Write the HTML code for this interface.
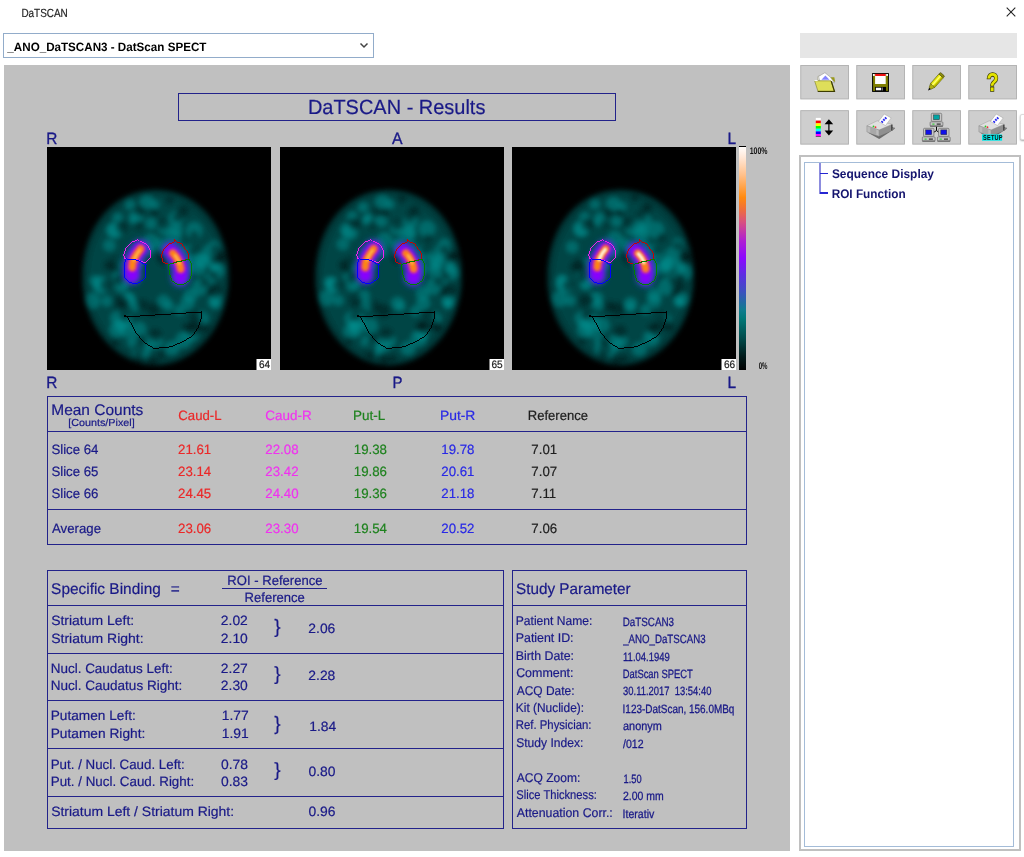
<!DOCTYPE html>
<html><head><meta charset="utf-8"><title>DaTSCAN</title>
<style>
html,body{margin:0;padding:0;background:#fff;}
body{width:1024px;height:857px;position:relative;overflow:hidden;font-family:"Liberation Sans",sans-serif;}
.abs,.t{position:absolute;white-space:nowrap;}
.t{color:#14147a;line-height:1;}
#panel{position:absolute;left:3.6px;top:64.85px;width:786.4px;height:785.8px;background:#c0c0c0;}
.brain{position:absolute;top:146.7px;}
.box{position:absolute;border:1px solid #22228a;box-sizing:border-box;}
.hl{position:absolute;height:1px;background:#22228a;}
.btn{position:absolute;width:48.7px;height:34.4px;background:#cdcdcd;box-sizing:border-box;border:1px solid #b4b4b4;border-bottom-color:#a8a8a8;border-right-color:#a8a8a8}
.f13{font-size:13.4px}
.sl{font-size:12.6px}.sv{font-size:11.4px}
.red{color:#e62828}.mag{color:#e83ce8}.grn{color:#1e7a1e}.blu{color:#2c2ce0}.blk{color:#1c1c1c}
</style></head><body>
<svg width="0" height="0" style="position:absolute"><defs>
<filter id="blur3" x="-20%" y="-20%" width="140%" height="140%"><feGaussianBlur stdDeviation="2.6"/></filter>
<filter id="blur5" x="-20%" y="-20%" width="140%" height="140%"><feGaussianBlur stdDeviation="5.5"/></filter>
<filter id="blur35" x="-60%" y="-60%" width="220%" height="220%"><feGaussianBlur stdDeviation="3.2"/></filter>
<filter id="blur2" x="-50%" y="-50%" width="200%" height="200%"><feGaussianBlur stdDeviation="2.6"/></filter>
<filter id="blur15" x="-50%" y="-50%" width="200%" height="200%"><feGaussianBlur stdDeviation="1.5"/></filter>
<filter id="blur1" x="-50%" y="-50%" width="200%" height="200%"><feGaussianBlur stdDeviation="1"/></filter>
</defs></svg>

<!-- title bar -->
<svg class="abs" style="left:1005px;top:6.3px" width="12" height="12" viewBox="0 0 12 12"><path d="M1.7 1.7 L10.3 10.3 M10.3 1.7 L1.7 10.3" stroke="#222" stroke-width="1.05" fill="none"/></svg>

<!-- combo -->
<div class="abs" style="left:3.3px;top:32.8px;width:370.6px;height:25px;box-sizing:border-box;border:1px solid #92acca;background:#fff"></div>
<svg class="abs" style="left:359px;top:42px" width="10" height="7" viewBox="0 0 10 7"><path d="M1.5 1.5 L5 5 L8.5 1.5" stroke="#444" stroke-width="1.5" fill="none"/></svg>

<div id="panel"></div>

<!-- results header -->
<div class="box" style="left:178px;top:93px;width:438px;height:27.5px"></div>

<!-- orientation labels -->

<svg class="brain" style="left:47px" width="224" height="223.4" viewBox="0 0 224 223.4">
<rect width="224" height="224" fill="#000"/>
<clipPath id="cp0"><path d="M34.599999999999994,130.0 C34.599999999999994,78.0 66.6,42 108.6,42 C150.6,42 182.6,78.0 182.6,130.0 C182.6,180.0 148.6,219 108.6,219 C68.6,219 34.599999999999994,180.0 34.599999999999994,130.0Z"/></clipPath>
<g filter="url(#blur3)"><g clip-path="url(#cp0)">
<path d="M34.599999999999994,130.0 C34.599999999999994,78.0 66.6,42 108.6,42 C150.6,42 182.6,78.0 182.6,130.0 C182.6,180.0 148.6,219 108.6,219 C68.6,219 34.599999999999994,180.0 34.599999999999994,130.0Z" fill="#003c3c"/>
<ellipse cx="108.6" cy="130.0" rx="67" ry="81" fill="#004545"/>
<circle cx="68.2" cy="83.7" r="7.7" fill="#009090" fill-opacity=".5"/>
<circle cx="162.7" cy="106.3" r="8.2" fill="#009090" fill-opacity=".5"/>
<circle cx="153.2" cy="140.1" r="8.3" fill="#009090" fill-opacity=".5"/>
<circle cx="70.7" cy="70.9" r="5.0" fill="#009090" fill-opacity=".5"/>
<circle cx="74.5" cy="139.3" r="6.7" fill="#009090" fill-opacity=".5"/>
<circle cx="87.5" cy="117.6" r="5.4" fill="#009090" fill-opacity=".5"/>
<circle cx="95.5" cy="204.1" r="7.6" fill="#009090" fill-opacity=".5"/>
<circle cx="140.6" cy="186.4" r="5.1" fill="#009090" fill-opacity=".5"/>
<circle cx="89.2" cy="108.8" r="4.5" fill="#009090" fill-opacity=".5"/>
<circle cx="132.3" cy="101.8" r="5.4" fill="#009090" fill-opacity=".5"/>
<circle cx="167.6" cy="120.1" r="5.7" fill="#009090" fill-opacity=".5"/>
<circle cx="155.6" cy="114.5" r="7.2" fill="#009090" fill-opacity=".5"/>
<circle cx="125.1" cy="201.0" r="7.3" fill="#009090" fill-opacity=".5"/>
<circle cx="166.9" cy="114.6" r="5.7" fill="#009090" fill-opacity=".5"/>
<circle cx="88.4" cy="159.6" r="5.1" fill="#009090" fill-opacity=".5"/>
<circle cx="143.5" cy="148.5" r="6.9" fill="#009090" fill-opacity=".5"/>
<circle cx="162.3" cy="132.0" r="5.9" fill="#009090" fill-opacity=".5"/>
<circle cx="86.8" cy="194.2" r="6.4" fill="#009090" fill-opacity=".5"/>
<circle cx="92.1" cy="182.0" r="7.3" fill="#009090" fill-opacity=".5"/>
<circle cx="170.2" cy="157.6" r="4.6" fill="#009090" fill-opacity=".5"/>
<circle cx="107.8" cy="57.8" r="4.6" fill="#009090" fill-opacity=".5"/>
<circle cx="117.4" cy="81.0" r="6.8" fill="#009090" fill-opacity=".5"/>
<circle cx="133.6" cy="131.2" r="5.2" fill="#009090" fill-opacity=".5"/>
<circle cx="141.4" cy="118.7" r="7.5" fill="#009090" fill-opacity=".5"/>
<circle cx="167.5" cy="99.3" r="5.9" fill="#009090" fill-opacity=".5"/>
<circle cx="77.4" cy="173.7" r="7.6" fill="#009090" fill-opacity=".5"/>
<circle cx="154.1" cy="172.0" r="7.7" fill="#009090" fill-opacity=".5"/>
<circle cx="125.4" cy="108.1" r="8.3" fill="#009090" fill-opacity=".5"/>
<circle cx="140.3" cy="156.2" r="6.9" fill="#009090" fill-opacity=".5"/>
<circle cx="144.3" cy="105.8" r="8.2" fill="#009090" fill-opacity=".5"/>
<circle cx="70.0" cy="116.5" r="5.8" fill="#009090" fill-opacity=".5"/>
<circle cx="121.9" cy="158.8" r="5.1" fill="#009090" fill-opacity=".5"/>
<circle cx="82.8" cy="57.3" r="5.1" fill="#009090" fill-opacity=".5"/>
<circle cx="168.7" cy="151.3" r="6.6" fill="#009090" fill-opacity=".5"/>
<circle cx="80.9" cy="151.8" r="6.9" fill="#009090" fill-opacity=".5"/>
<circle cx="129.5" cy="82.5" r="6.2" fill="#009090" fill-opacity=".5"/>
<circle cx="165.9" cy="156.3" r="4.6" fill="#009090" fill-opacity=".5"/>
<circle cx="47.6" cy="133.4" r="5.0" fill="#009090" fill-opacity=".5"/>
<circle cx="99.8" cy="54.7" r="7.0" fill="#009090" fill-opacity=".5"/>
<circle cx="114.0" cy="97.1" r="6.2" fill="#009090" fill-opacity=".5"/>
<circle cx="145.9" cy="188.6" r="5.7" fill="#009090" fill-opacity=".5"/>
<circle cx="45.5" cy="154.0" r="7.9" fill="#009090" fill-opacity=".5"/>
<circle cx="151.7" cy="121.6" r="6.5" fill="#009090" fill-opacity=".5"/>
<circle cx="104.1" cy="76.5" r="5.7" fill="#009090" fill-opacity=".5"/>
<circle cx="82.3" cy="152.2" r="6.0" fill="#009090" fill-opacity=".5"/>
<circle cx="171.1" cy="123.5" r="7.0" fill="#009090" fill-opacity=".5"/>
<circle cx="70.0" cy="129.5" r="4.9" fill="#009090" fill-opacity=".5"/>
<circle cx="99.7" cy="196.1" r="8.0" fill="#009090" fill-opacity=".5"/>
<circle cx="69.8" cy="182.9" r="7.6" fill="#009090" fill-opacity=".5"/>
<circle cx="89.4" cy="70.9" r="7.5" fill="#009090" fill-opacity=".5"/>
<circle cx="72.3" cy="179.1" r="5.6" fill="#009090" fill-opacity=".5"/>
<circle cx="53.5" cy="136.0" r="7.3" fill="#009090" fill-opacity=".5"/>
<circle cx="91.7" cy="203.9" r="7.1" fill="#009090" fill-opacity=".5"/>
<circle cx="88.4" cy="116.1" r="6.7" fill="#009090" fill-opacity=".5"/>
<circle cx="110.0" cy="194.9" r="6.4" fill="#009090" fill-opacity=".5"/>
<circle cx="129.0" cy="71.6" r="7.7" fill="#009090" fill-opacity=".5"/>
<circle cx="79.3" cy="182.7" r="7.5" fill="#009090" fill-opacity=".5"/>
<circle cx="126.4" cy="89.7" r="7.9" fill="#009090" fill-opacity=".5"/>
<circle cx="147.2" cy="83.5" r="8.4" fill="#009090" fill-opacity=".5"/>
<circle cx="154.0" cy="113.2" r="6.6" fill="#009090" fill-opacity=".5"/>
<circle cx="136.7" cy="193.1" r="8.2" fill="#009090" fill-opacity=".5"/>
<circle cx="53.9" cy="140.0" r="7.4" fill="#009090" fill-opacity=".5"/>
<circle cx="103.8" cy="94.3" r="7.6" fill="#009090" fill-opacity=".5"/>
<circle cx="62.4" cy="98.4" r="6.2" fill="#009090" fill-opacity=".5"/>
<circle cx="66.4" cy="83.1" r="7.0" fill="#009090" fill-opacity=".5"/>
<circle cx="102.7" cy="102.3" r="5.1" fill="#009090" fill-opacity=".5"/>
<circle cx="59.7" cy="154.1" r="5.4" fill="#009090" fill-opacity=".5"/>
<circle cx="88.7" cy="72.3" r="4.7" fill="#009090" fill-opacity=".5"/>
<circle cx="76.6" cy="136.0" r="4.7" fill="#009090" fill-opacity=".5"/>
<circle cx="132.5" cy="163.3" r="5.2" fill="#009090" fill-opacity=".5"/>
<circle cx="116.5" cy="154.2" r="6.4" fill="#009090" fill-opacity=".5"/>
<circle cx="69.9" cy="171.1" r="6.9" fill="#009090" fill-opacity=".5"/>
<circle cx="114.0" cy="207.7" r="4.0" fill="#001a1a" fill-opacity=".5"/>
<circle cx="77.3" cy="156.3" r="5.2" fill="#001a1a" fill-opacity=".5"/>
<circle cx="158.6" cy="181.1" r="5.1" fill="#001a1a" fill-opacity=".5"/>
<circle cx="163.0" cy="145.0" r="4.3" fill="#001a1a" fill-opacity=".5"/>
<circle cx="67.8" cy="114.5" r="5.7" fill="#001a1a" fill-opacity=".5"/>
<circle cx="168.1" cy="112.1" r="5.3" fill="#001a1a" fill-opacity=".5"/>
<circle cx="131.1" cy="70.0" r="5.1" fill="#001a1a" fill-opacity=".5"/>
<circle cx="140.7" cy="180.8" r="5.7" fill="#001a1a" fill-opacity=".5"/>
<circle cx="175.2" cy="109.1" r="5.8" fill="#001a1a" fill-opacity=".5"/>
<circle cx="68.4" cy="195.6" r="4.0" fill="#001a1a" fill-opacity=".5"/>
<circle cx="148.1" cy="169.6" r="5.8" fill="#001a1a" fill-opacity=".5"/>
<circle cx="144.9" cy="182.9" r="6.7" fill="#001a1a" fill-opacity=".5"/>
<circle cx="76.7" cy="169.4" r="4.7" fill="#001a1a" fill-opacity=".5"/>
<circle cx="91.9" cy="211.3" r="5.1" fill="#001a1a" fill-opacity=".5"/>
<circle cx="173.2" cy="111.4" r="5.8" fill="#001a1a" fill-opacity=".5"/>
<circle cx="105.9" cy="214.1" r="5.5" fill="#001a1a" fill-opacity=".5"/>
<circle cx="74.0" cy="155.1" r="7.0" fill="#001a1a" fill-opacity=".5"/>
<circle cx="72.5" cy="132.6" r="5.4" fill="#001a1a" fill-opacity=".5"/>
<circle cx="149.1" cy="175.2" r="5.3" fill="#001a1a" fill-opacity=".5"/>
<circle cx="92.3" cy="201.7" r="6.5" fill="#001a1a" fill-opacity=".5"/>
<circle cx="158.0" cy="135.6" r="4.8" fill="#001a1a" fill-opacity=".5"/>
<circle cx="167.7" cy="102.3" r="4.7" fill="#001a1a" fill-opacity=".5"/>
<circle cx="106.4" cy="162.2" r="7.0" fill="#001a1a" fill-opacity=".5"/>
<circle cx="94.8" cy="193.1" r="5.4" fill="#001a1a" fill-opacity=".5"/>
<circle cx="74.8" cy="80.1" r="6.2" fill="#001a1a" fill-opacity=".5"/>
<circle cx="152.1" cy="180.3" r="4.9" fill="#001a1a" fill-opacity=".5"/>
<circle cx="66.9" cy="120.3" r="4.9" fill="#001a1a" fill-opacity=".5"/>
<circle cx="61.5" cy="118.3" r="5.1" fill="#001a1a" fill-opacity=".5"/>
<circle cx="107.7" cy="65.8" r="4.1" fill="#001a1a" fill-opacity=".5"/>
<circle cx="108.3" cy="188.1" r="6.7" fill="#001a1a" fill-opacity=".5"/>
<circle cx="147.2" cy="88.1" r="4.0" fill="#001a1a" fill-opacity=".5"/>
<circle cx="116.0" cy="76.9" r="5.7" fill="#001a1a" fill-opacity=".5"/>
<circle cx="92.9" cy="64.5" r="5.4" fill="#001a1a" fill-opacity=".5"/>
<circle cx="147.3" cy="103.3" r="5.2" fill="#001a1a" fill-opacity=".5"/>
<circle cx="127.0" cy="101.9" r="4.9" fill="#001a1a" fill-opacity=".5"/>
<circle cx="116.6" cy="111.8" r="6.5" fill="#001a1a" fill-opacity=".5"/>
<circle cx="91.6" cy="78.0" r="4.9" fill="#001a1a" fill-opacity=".5"/>
<circle cx="122.7" cy="53.4" r="4.4" fill="#001a1a" fill-opacity=".5"/>
<circle cx="58.5" cy="137.9" r="5.5" fill="#001a1a" fill-opacity=".5"/>
<circle cx="95.6" cy="157.9" r="5.8" fill="#001a1a" fill-opacity=".5"/>
<circle cx="114.1" cy="109.7" r="4.7" fill="#001a1a" fill-opacity=".5"/>
<circle cx="136.4" cy="64.0" r="6.0" fill="#001a1a" fill-opacity=".5"/>
<circle cx="168.4" cy="143.2" r="6.9" fill="#001a1a" fill-opacity=".5"/>
<circle cx="166.6" cy="127.9" r="4.1" fill="#001a1a" fill-opacity=".5"/>
</g></g>
<path filter="url(#blur5)" fill="#000" fill-rule="evenodd" d="M-30,-30H254V254H-30Z M31.099999999999994,130.0 C31.099999999999994,78.0 66.6,38.5 108.6,38.5 C150.6,38.5 186.1,78.0 186.1,130.0 C186.1,180.0 148.6,222.5 108.6,222.5 C68.6,222.5 31.099999999999994,180.0 31.099999999999994,130.0Z"/>
<g fill="none" stroke-linecap="round">
<g filter="url(#blur35)" stroke="#2c50c4" stroke-width="19" stroke-opacity=".75"><path d="M93.8,101.5 Q88.5,107.0 85.5,116.0 Q84.0,123.0 85.0,128.5"/><path d="M123.5,103.5 Q130.0,109.0 133.0,119.0 Q134.5,125.0 133.3,130.5"/></g>
<g filter="url(#blur2)" stroke="#8800ff" stroke-width="14"><path d="M93.8,101.5 Q88.5,107.0 85.5,116.0 Q84.0,123.0 85.0,128.5"/><path d="M123.5,103.5 Q130.0,109.0 133.0,119.0 Q134.5,125.0 133.3,130.5"/></g>
<g filter="url(#blur15)" stroke="#e04088" stroke-width="8.5"><path d="M93.6,101.8 Q88.5,107.5 85.6,115.5 L85.2,120.5"/><path d="M125.8,106.2 Q130.5,110.5 133.0,118.5 L133.6,122.0"/></g>
<g filter="url(#blur15)" stroke="#ff8810" stroke-width="5.6"><path d="M93.6,101.8 Q88.5,107.5 85.6,115.5 L85.2,120.5"/><path d="M125.8,106.2 Q130.5,110.5 133.0,118.5 L133.6,122.0"/></g>
<g filter="url(#blur1)" stroke="#ffb050" stroke-width="2.6"><path d="M92.5,103.5 Q89.5,107.0 87.0,113.0"/><path d="M128.0,108.5 Q130.8,111.5 132.4,116.5"/></g>
</g>
<polygon points="90.2,91.8 92.7,94.3 96.1,95.2 100.7,98.5 103.7,104.0 103.7,110.3 97.8,115.8 92.3,113.7 89.8,112.4 83.9,112.4 78.0,111.8 76.6,107.6 79.3,100.6 84.3,95.2 89.8,93.5" fill="none" stroke="#f020f0" stroke-width="1" shape-rendering="crispEdges"/>
<polygon points="78.5,112.0 85.6,112.4 91.9,113.7 96.9,117.0 100.3,117.4 98.2,118.3 98.2,130.9 94.8,133.8 90.2,136.3 82.9,135.9 78.0,130.9 77.2,121.2" fill="none" stroke="#0000ff" stroke-width="1" shape-rendering="crispEdges"/>
<polygon points="127.6,92.4 129.7,95.2 134.3,96.4 137.7,101.5 141.7,106.5 141.9,111.8 136.4,113.7 129.1,114.9 121.7,117.4 115.8,114.9 114.4,108.6 116.7,102.3 121.7,97.3 127.2,95.2" fill="none" stroke="#c80000" stroke-width="1" shape-rendering="crispEdges"/>
<polygon points="121.7,117.4 129.1,115.3 136.4,113.7 142.3,112.0 144.4,117.0 144.6,126.5 142.7,133.0 138.1,137.0 130.1,137.2 124.9,133.8 122.8,127.5 121.7,121.2" fill="none" stroke="#008000" stroke-width="1" shape-rendering="crispEdges"/>
<polygon points="76.6,168.5 78.5,169.9 154.9,164.9 154.1,171.6 151.5,180.0 146.1,188.4 136.8,194.3 123.8,199.8 107.0,201.5 96.9,195.2 89.4,186.3 83.9,176.2 79.7,169.1" fill="none" stroke="#000" stroke-width="1" shape-rendering="crispEdges"/>
<rect x="209.5" y="212" width="14.5" height="12" fill="#fff"/>
</svg>
<svg class="brain" style="left:279.6px" width="224" height="223.4" viewBox="0 0 224 223.4">
<rect width="224" height="224" fill="#000"/>
<clipPath id="cp1"><path d="M34.599999999999994,130.0 C34.599999999999994,78.0 66.6,42 108.6,42 C150.6,42 182.6,78.0 182.6,130.0 C182.6,180.0 148.6,219 108.6,219 C68.6,219 34.599999999999994,180.0 34.599999999999994,130.0Z"/></clipPath>
<g filter="url(#blur3)"><g clip-path="url(#cp1)">
<path d="M34.599999999999994,130.0 C34.599999999999994,78.0 66.6,42 108.6,42 C150.6,42 182.6,78.0 182.6,130.0 C182.6,180.0 148.6,219 108.6,219 C68.6,219 34.599999999999994,180.0 34.599999999999994,130.0Z" fill="#003c3c"/>
<ellipse cx="108.6" cy="130.0" rx="67" ry="81" fill="#004545"/>
<circle cx="70.1" cy="85.2" r="7.7" fill="#009090" fill-opacity=".5"/>
<circle cx="162.6" cy="104.8" r="8.2" fill="#009090" fill-opacity=".5"/>
<circle cx="153.5" cy="139.5" r="8.3" fill="#009090" fill-opacity=".5"/>
<circle cx="72.1" cy="69.4" r="5.0" fill="#009090" fill-opacity=".5"/>
<circle cx="72.8" cy="137.9" r="6.7" fill="#009090" fill-opacity=".5"/>
<circle cx="88.0" cy="118.2" r="5.4" fill="#009090" fill-opacity=".5"/>
<circle cx="95.2" cy="201.2" r="7.6" fill="#009090" fill-opacity=".5"/>
<circle cx="140.7" cy="188.0" r="5.1" fill="#009090" fill-opacity=".5"/>
<circle cx="87.3" cy="107.8" r="4.5" fill="#009090" fill-opacity=".5"/>
<circle cx="131.1" cy="99.5" r="5.4" fill="#009090" fill-opacity=".5"/>
<circle cx="170.1" cy="122.4" r="5.7" fill="#009090" fill-opacity=".5"/>
<circle cx="156.2" cy="116.7" r="7.2" fill="#009090" fill-opacity=".5"/>
<circle cx="128.2" cy="201.5" r="7.3" fill="#009090" fill-opacity=".5"/>
<circle cx="169.8" cy="114.2" r="5.7" fill="#009090" fill-opacity=".5"/>
<circle cx="88.9" cy="158.9" r="5.1" fill="#009090" fill-opacity=".5"/>
<circle cx="142.7" cy="146.3" r="6.9" fill="#009090" fill-opacity=".5"/>
<circle cx="162.2" cy="132.2" r="5.9" fill="#009090" fill-opacity=".5"/>
<circle cx="87.3" cy="194.9" r="6.4" fill="#009090" fill-opacity=".5"/>
<circle cx="90.7" cy="178.8" r="7.3" fill="#009090" fill-opacity=".5"/>
<circle cx="167.5" cy="156.1" r="4.6" fill="#009090" fill-opacity=".5"/>
<circle cx="109.8" cy="57.6" r="4.6" fill="#009090" fill-opacity=".5"/>
<circle cx="116.7" cy="81.1" r="6.8" fill="#009090" fill-opacity=".5"/>
<circle cx="130.7" cy="130.7" r="5.2" fill="#009090" fill-opacity=".5"/>
<circle cx="140.3" cy="120.5" r="7.5" fill="#009090" fill-opacity=".5"/>
<circle cx="165.0" cy="97.3" r="5.9" fill="#009090" fill-opacity=".5"/>
<circle cx="78.5" cy="174.1" r="7.6" fill="#009090" fill-opacity=".5"/>
<circle cx="153.6" cy="172.3" r="7.7" fill="#009090" fill-opacity=".5"/>
<circle cx="122.5" cy="107.0" r="8.3" fill="#009090" fill-opacity=".5"/>
<circle cx="143.2" cy="156.5" r="6.9" fill="#009090" fill-opacity=".5"/>
<circle cx="144.5" cy="105.7" r="8.2" fill="#009090" fill-opacity=".5"/>
<circle cx="71.9" cy="118.9" r="5.8" fill="#009090" fill-opacity=".5"/>
<circle cx="120.4" cy="159.5" r="5.1" fill="#009090" fill-opacity=".5"/>
<circle cx="83.0" cy="60.2" r="5.1" fill="#009090" fill-opacity=".5"/>
<circle cx="168.5" cy="152.8" r="6.6" fill="#009090" fill-opacity=".5"/>
<circle cx="77.8" cy="154.3" r="6.9" fill="#009090" fill-opacity=".5"/>
<circle cx="130.0" cy="84.6" r="6.2" fill="#009090" fill-opacity=".5"/>
<circle cx="168.3" cy="157.2" r="4.6" fill="#009090" fill-opacity=".5"/>
<circle cx="49.2" cy="134.8" r="5.0" fill="#009090" fill-opacity=".5"/>
<circle cx="102.3" cy="54.4" r="7.0" fill="#009090" fill-opacity=".5"/>
<circle cx="117.1" cy="97.5" r="6.2" fill="#009090" fill-opacity=".5"/>
<circle cx="142.8" cy="185.7" r="5.7" fill="#009090" fill-opacity=".5"/>
<circle cx="46.2" cy="151.2" r="7.9" fill="#009090" fill-opacity=".5"/>
<circle cx="154.6" cy="123.8" r="6.5" fill="#009090" fill-opacity=".5"/>
<circle cx="101.6" cy="74.3" r="5.7" fill="#009090" fill-opacity=".5"/>
<circle cx="84.0" cy="148.9" r="6.0" fill="#009090" fill-opacity=".5"/>
<circle cx="172.4" cy="125.7" r="7.0" fill="#009090" fill-opacity=".5"/>
<circle cx="67.9" cy="129.9" r="4.9" fill="#009090" fill-opacity=".5"/>
<circle cx="102.2" cy="197.6" r="8.0" fill="#009090" fill-opacity=".5"/>
<circle cx="70.8" cy="184.1" r="7.6" fill="#009090" fill-opacity=".5"/>
<circle cx="91.7" cy="72.1" r="7.5" fill="#009090" fill-opacity=".5"/>
<circle cx="73.6" cy="178.9" r="5.6" fill="#009090" fill-opacity=".5"/>
<circle cx="52.5" cy="137.4" r="7.3" fill="#009090" fill-opacity=".5"/>
<circle cx="91.9" cy="201.4" r="7.1" fill="#009090" fill-opacity=".5"/>
<circle cx="88.8" cy="117.1" r="6.7" fill="#009090" fill-opacity=".5"/>
<circle cx="109.5" cy="193.9" r="6.4" fill="#009090" fill-opacity=".5"/>
<circle cx="130.2" cy="74.2" r="7.7" fill="#009090" fill-opacity=".5"/>
<circle cx="76.8" cy="181.5" r="7.5" fill="#009090" fill-opacity=".5"/>
<circle cx="126.9" cy="88.1" r="7.9" fill="#009090" fill-opacity=".5"/>
<circle cx="147.0" cy="82.0" r="8.4" fill="#009090" fill-opacity=".5"/>
<circle cx="156.1" cy="113.1" r="6.6" fill="#009090" fill-opacity=".5"/>
<circle cx="138.8" cy="191.4" r="8.2" fill="#009090" fill-opacity=".5"/>
<circle cx="53.8" cy="139.4" r="7.4" fill="#009090" fill-opacity=".5"/>
<circle cx="104.6" cy="92.8" r="7.6" fill="#009090" fill-opacity=".5"/>
<circle cx="62.9" cy="97.2" r="6.2" fill="#009090" fill-opacity=".5"/>
<circle cx="67.3" cy="83.3" r="7.0" fill="#009090" fill-opacity=".5"/>
<circle cx="103.0" cy="104.9" r="5.1" fill="#009090" fill-opacity=".5"/>
<circle cx="58.3" cy="153.4" r="5.4" fill="#009090" fill-opacity=".5"/>
<circle cx="86.9" cy="73.0" r="4.7" fill="#009090" fill-opacity=".5"/>
<circle cx="74.6" cy="135.6" r="4.7" fill="#009090" fill-opacity=".5"/>
<circle cx="135.2" cy="164.1" r="5.2" fill="#009090" fill-opacity=".5"/>
<circle cx="117.5" cy="156.1" r="6.4" fill="#009090" fill-opacity=".5"/>
<circle cx="71.4" cy="171.7" r="6.9" fill="#009090" fill-opacity=".5"/>
<circle cx="112.9" cy="210.8" r="4.0" fill="#001a1a" fill-opacity=".5"/>
<circle cx="76.2" cy="156.2" r="5.2" fill="#001a1a" fill-opacity=".5"/>
<circle cx="158.1" cy="180.4" r="5.1" fill="#001a1a" fill-opacity=".5"/>
<circle cx="163.4" cy="145.4" r="4.3" fill="#001a1a" fill-opacity=".5"/>
<circle cx="69.7" cy="115.5" r="5.7" fill="#001a1a" fill-opacity=".5"/>
<circle cx="169.3" cy="109.8" r="5.3" fill="#001a1a" fill-opacity=".5"/>
<circle cx="129.5" cy="70.0" r="5.1" fill="#001a1a" fill-opacity=".5"/>
<circle cx="142.0" cy="179.8" r="5.7" fill="#001a1a" fill-opacity=".5"/>
<circle cx="175.0" cy="109.4" r="5.8" fill="#001a1a" fill-opacity=".5"/>
<circle cx="69.1" cy="193.8" r="4.0" fill="#001a1a" fill-opacity=".5"/>
<circle cx="148.8" cy="168.6" r="5.8" fill="#001a1a" fill-opacity=".5"/>
<circle cx="142.3" cy="180.2" r="6.7" fill="#001a1a" fill-opacity=".5"/>
<circle cx="74.8" cy="170.0" r="4.7" fill="#001a1a" fill-opacity=".5"/>
<circle cx="90.7" cy="208.1" r="5.1" fill="#001a1a" fill-opacity=".5"/>
<circle cx="173.7" cy="109.2" r="5.8" fill="#001a1a" fill-opacity=".5"/>
<circle cx="104.6" cy="212.4" r="5.5" fill="#001a1a" fill-opacity=".5"/>
<circle cx="75.8" cy="153.0" r="7.0" fill="#001a1a" fill-opacity=".5"/>
<circle cx="72.4" cy="131.3" r="5.4" fill="#001a1a" fill-opacity=".5"/>
<circle cx="150.5" cy="176.2" r="5.3" fill="#001a1a" fill-opacity=".5"/>
<circle cx="90.1" cy="202.4" r="6.5" fill="#001a1a" fill-opacity=".5"/>
<circle cx="158.8" cy="134.5" r="4.8" fill="#001a1a" fill-opacity=".5"/>
<circle cx="164.3" cy="102.1" r="4.7" fill="#001a1a" fill-opacity=".5"/>
<circle cx="103.9" cy="163.6" r="7.0" fill="#001a1a" fill-opacity=".5"/>
<circle cx="93.5" cy="193.5" r="5.4" fill="#001a1a" fill-opacity=".5"/>
<circle cx="74.3" cy="77.0" r="6.2" fill="#001a1a" fill-opacity=".5"/>
<circle cx="155.4" cy="179.9" r="4.9" fill="#001a1a" fill-opacity=".5"/>
<circle cx="67.4" cy="121.8" r="4.9" fill="#001a1a" fill-opacity=".5"/>
<circle cx="63.2" cy="118.1" r="5.1" fill="#001a1a" fill-opacity=".5"/>
<circle cx="105.0" cy="66.2" r="4.1" fill="#001a1a" fill-opacity=".5"/>
<circle cx="106.4" cy="187.4" r="6.7" fill="#001a1a" fill-opacity=".5"/>
<circle cx="148.1" cy="90.9" r="4.0" fill="#001a1a" fill-opacity=".5"/>
<circle cx="117.0" cy="77.3" r="5.7" fill="#001a1a" fill-opacity=".5"/>
<circle cx="95.4" cy="66.2" r="5.4" fill="#001a1a" fill-opacity=".5"/>
<circle cx="146.1" cy="102.0" r="5.2" fill="#001a1a" fill-opacity=".5"/>
<circle cx="125.8" cy="98.7" r="4.9" fill="#001a1a" fill-opacity=".5"/>
<circle cx="118.7" cy="110.0" r="6.5" fill="#001a1a" fill-opacity=".5"/>
<circle cx="92.5" cy="77.6" r="4.9" fill="#001a1a" fill-opacity=".5"/>
<circle cx="122.0" cy="51.8" r="4.4" fill="#001a1a" fill-opacity=".5"/>
<circle cx="58.4" cy="138.1" r="5.5" fill="#001a1a" fill-opacity=".5"/>
<circle cx="94.7" cy="159.2" r="5.8" fill="#001a1a" fill-opacity=".5"/>
<circle cx="116.5" cy="111.5" r="4.7" fill="#001a1a" fill-opacity=".5"/>
<circle cx="134.3" cy="64.2" r="6.0" fill="#001a1a" fill-opacity=".5"/>
<circle cx="169.5" cy="143.3" r="6.9" fill="#001a1a" fill-opacity=".5"/>
<circle cx="166.0" cy="128.8" r="4.1" fill="#001a1a" fill-opacity=".5"/>
</g></g>
<path filter="url(#blur5)" fill="#000" fill-rule="evenodd" d="M-30,-30H254V254H-30Z M31.099999999999994,130.0 C31.099999999999994,78.0 66.6,38.5 108.6,38.5 C150.6,38.5 186.1,78.0 186.1,130.0 C186.1,180.0 148.6,222.5 108.6,222.5 C68.6,222.5 31.099999999999994,180.0 31.099999999999994,130.0Z"/>
<g fill="none" stroke-linecap="round">
<g filter="url(#blur35)" stroke="#2c50c4" stroke-width="19" stroke-opacity=".75"><path d="M93.8,101.5 Q88.5,107.0 85.5,116.0 Q84.0,123.0 85.0,128.5"/><path d="M123.5,103.5 Q130.0,109.0 133.0,119.0 Q134.5,125.0 133.3,130.5"/></g>
<g filter="url(#blur2)" stroke="#8800ff" stroke-width="14"><path d="M93.8,101.5 Q88.5,107.0 85.5,116.0 Q84.0,123.0 85.0,128.5"/><path d="M123.5,103.5 Q130.0,109.0 133.0,119.0 Q134.5,125.0 133.3,130.5"/></g>
<g filter="url(#blur15)" stroke="#e04088" stroke-width="8.5"><path d="M93.6,101.8 Q88.5,107.5 85.6,115.5 L85.2,120.5"/><path d="M125.8,106.2 Q130.5,110.5 133.0,118.5 L133.6,122.0"/></g>
<g filter="url(#blur15)" stroke="#ff8810" stroke-width="5.6"><path d="M93.6,101.8 Q88.5,107.5 85.6,115.5 L85.2,120.5"/><path d="M125.8,106.2 Q130.5,110.5 133.0,118.5 L133.6,122.0"/></g>
<g filter="url(#blur1)" stroke="#ffb050" stroke-width="2.6"><path d="M92.5,103.5 Q89.5,107.0 87.0,113.0"/><path d="M128.0,108.5 Q130.8,111.5 132.4,116.5"/></g>
</g>
<polygon points="90.2,91.8 92.7,94.3 96.1,95.2 100.7,98.5 103.7,104.0 103.7,110.3 97.8,115.8 92.3,113.7 89.8,112.4 83.9,112.4 78.0,111.8 76.6,107.6 79.3,100.6 84.3,95.2 89.8,93.5" fill="none" stroke="#f020f0" stroke-width="1" shape-rendering="crispEdges"/>
<polygon points="78.5,112.0 85.6,112.4 91.9,113.7 96.9,117.0 100.3,117.4 98.2,118.3 98.2,130.9 94.8,133.8 90.2,136.3 82.9,135.9 78.0,130.9 77.2,121.2" fill="none" stroke="#0000ff" stroke-width="1" shape-rendering="crispEdges"/>
<polygon points="127.6,92.4 129.7,95.2 134.3,96.4 137.7,101.5 141.7,106.5 141.9,111.8 136.4,113.7 129.1,114.9 121.7,117.4 115.8,114.9 114.4,108.6 116.7,102.3 121.7,97.3 127.2,95.2" fill="none" stroke="#c80000" stroke-width="1" shape-rendering="crispEdges"/>
<polygon points="121.7,117.4 129.1,115.3 136.4,113.7 142.3,112.0 144.4,117.0 144.6,126.5 142.7,133.0 138.1,137.0 130.1,137.2 124.9,133.8 122.8,127.5 121.7,121.2" fill="none" stroke="#008000" stroke-width="1" shape-rendering="crispEdges"/>
<polygon points="76.6,168.5 78.5,169.9 154.9,164.9 154.1,171.6 151.5,180.0 146.1,188.4 136.8,194.3 123.8,199.8 107.0,201.5 96.9,195.2 89.4,186.3 83.9,176.2 79.7,169.1" fill="none" stroke="#000" stroke-width="1" shape-rendering="crispEdges"/>
<rect x="209.5" y="212" width="14.5" height="12" fill="#fff"/>
</svg>
<svg class="brain" style="left:512.1px" width="224" height="223.4" viewBox="0 0 224 223.4">
<rect width="224" height="224" fill="#000"/>
<clipPath id="cp2"><path d="M34.599999999999994,130.0 C34.599999999999994,78.0 66.6,42 108.6,42 C150.6,42 182.6,78.0 182.6,130.0 C182.6,180.0 148.6,219 108.6,219 C68.6,219 34.599999999999994,180.0 34.599999999999994,130.0Z"/></clipPath>
<g filter="url(#blur3)"><g clip-path="url(#cp2)">
<path d="M34.599999999999994,130.0 C34.599999999999994,78.0 66.6,42 108.6,42 C150.6,42 182.6,78.0 182.6,130.0 C182.6,180.0 148.6,219 108.6,219 C68.6,219 34.599999999999994,180.0 34.599999999999994,130.0Z" fill="#003c3c"/>
<ellipse cx="108.6" cy="130.0" rx="67" ry="81" fill="#004545"/>
<circle cx="69.1" cy="81.8" r="7.7" fill="#009090" fill-opacity=".5"/>
<circle cx="161.5" cy="107.8" r="8.2" fill="#009090" fill-opacity=".5"/>
<circle cx="154.5" cy="139.8" r="8.3" fill="#009090" fill-opacity=".5"/>
<circle cx="72.5" cy="70.3" r="5.0" fill="#009090" fill-opacity=".5"/>
<circle cx="74.1" cy="136.5" r="6.7" fill="#009090" fill-opacity=".5"/>
<circle cx="89.9" cy="118.8" r="5.4" fill="#009090" fill-opacity=".5"/>
<circle cx="96.3" cy="202.3" r="7.6" fill="#009090" fill-opacity=".5"/>
<circle cx="140.8" cy="188.0" r="5.1" fill="#009090" fill-opacity=".5"/>
<circle cx="89.1" cy="108.8" r="4.5" fill="#009090" fill-opacity=".5"/>
<circle cx="133.0" cy="99.7" r="5.4" fill="#009090" fill-opacity=".5"/>
<circle cx="167.3" cy="121.2" r="5.7" fill="#009090" fill-opacity=".5"/>
<circle cx="155.0" cy="117.0" r="7.2" fill="#009090" fill-opacity=".5"/>
<circle cx="127.6" cy="202.3" r="7.3" fill="#009090" fill-opacity=".5"/>
<circle cx="169.3" cy="115.0" r="5.7" fill="#009090" fill-opacity=".5"/>
<circle cx="86.8" cy="158.4" r="5.1" fill="#009090" fill-opacity=".5"/>
<circle cx="142.2" cy="147.6" r="6.9" fill="#009090" fill-opacity=".5"/>
<circle cx="160.4" cy="132.0" r="5.9" fill="#009090" fill-opacity=".5"/>
<circle cx="88.6" cy="193.4" r="6.4" fill="#009090" fill-opacity=".5"/>
<circle cx="90.5" cy="178.1" r="7.3" fill="#009090" fill-opacity=".5"/>
<circle cx="168.2" cy="155.4" r="4.6" fill="#009090" fill-opacity=".5"/>
<circle cx="110.0" cy="59.8" r="4.6" fill="#009090" fill-opacity=".5"/>
<circle cx="119.8" cy="81.6" r="6.8" fill="#009090" fill-opacity=".5"/>
<circle cx="133.5" cy="132.4" r="5.2" fill="#009090" fill-opacity=".5"/>
<circle cx="140.0" cy="120.9" r="7.5" fill="#009090" fill-opacity=".5"/>
<circle cx="166.2" cy="97.0" r="5.9" fill="#009090" fill-opacity=".5"/>
<circle cx="80.3" cy="174.8" r="7.6" fill="#009090" fill-opacity=".5"/>
<circle cx="151.3" cy="172.6" r="7.7" fill="#009090" fill-opacity=".5"/>
<circle cx="121.7" cy="108.4" r="8.3" fill="#009090" fill-opacity=".5"/>
<circle cx="142.2" cy="153.6" r="6.9" fill="#009090" fill-opacity=".5"/>
<circle cx="143.8" cy="105.1" r="8.2" fill="#009090" fill-opacity=".5"/>
<circle cx="72.3" cy="116.6" r="5.8" fill="#009090" fill-opacity=".5"/>
<circle cx="118.2" cy="159.8" r="5.1" fill="#009090" fill-opacity=".5"/>
<circle cx="82.6" cy="56.9" r="5.1" fill="#009090" fill-opacity=".5"/>
<circle cx="170.3" cy="152.1" r="6.6" fill="#009090" fill-opacity=".5"/>
<circle cx="79.8" cy="153.0" r="6.9" fill="#009090" fill-opacity=".5"/>
<circle cx="129.6" cy="82.8" r="6.2" fill="#009090" fill-opacity=".5"/>
<circle cx="166.3" cy="154.2" r="4.6" fill="#009090" fill-opacity=".5"/>
<circle cx="49.8" cy="132.6" r="5.0" fill="#009090" fill-opacity=".5"/>
<circle cx="101.4" cy="56.7" r="7.0" fill="#009090" fill-opacity=".5"/>
<circle cx="113.2" cy="97.1" r="6.2" fill="#009090" fill-opacity=".5"/>
<circle cx="144.2" cy="185.6" r="5.7" fill="#009090" fill-opacity=".5"/>
<circle cx="47.3" cy="152.1" r="7.9" fill="#009090" fill-opacity=".5"/>
<circle cx="152.1" cy="120.8" r="6.5" fill="#009090" fill-opacity=".5"/>
<circle cx="104.6" cy="74.1" r="5.7" fill="#009090" fill-opacity=".5"/>
<circle cx="85.2" cy="151.1" r="6.0" fill="#009090" fill-opacity=".5"/>
<circle cx="173.8" cy="125.3" r="7.0" fill="#009090" fill-opacity=".5"/>
<circle cx="68.3" cy="130.4" r="4.9" fill="#009090" fill-opacity=".5"/>
<circle cx="102.2" cy="196.0" r="8.0" fill="#009090" fill-opacity=".5"/>
<circle cx="72.8" cy="183.2" r="7.6" fill="#009090" fill-opacity=".5"/>
<circle cx="89.2" cy="72.4" r="7.5" fill="#009090" fill-opacity=".5"/>
<circle cx="72.0" cy="177.3" r="5.6" fill="#009090" fill-opacity=".5"/>
<circle cx="50.8" cy="136.2" r="7.3" fill="#009090" fill-opacity=".5"/>
<circle cx="89.5" cy="202.8" r="7.1" fill="#009090" fill-opacity=".5"/>
<circle cx="89.4" cy="116.8" r="6.7" fill="#009090" fill-opacity=".5"/>
<circle cx="109.4" cy="194.1" r="6.4" fill="#009090" fill-opacity=".5"/>
<circle cx="131.9" cy="74.3" r="7.7" fill="#009090" fill-opacity=".5"/>
<circle cx="79.8" cy="182.7" r="7.5" fill="#009090" fill-opacity=".5"/>
<circle cx="129.0" cy="87.8" r="7.9" fill="#009090" fill-opacity=".5"/>
<circle cx="143.9" cy="82.8" r="8.4" fill="#009090" fill-opacity=".5"/>
<circle cx="154.8" cy="116.6" r="6.6" fill="#009090" fill-opacity=".5"/>
<circle cx="139.1" cy="191.5" r="8.2" fill="#009090" fill-opacity=".5"/>
<circle cx="53.2" cy="139.8" r="7.4" fill="#009090" fill-opacity=".5"/>
<circle cx="102.9" cy="91.6" r="7.6" fill="#009090" fill-opacity=".5"/>
<circle cx="60.2" cy="100.1" r="6.2" fill="#009090" fill-opacity=".5"/>
<circle cx="69.5" cy="82.6" r="7.0" fill="#009090" fill-opacity=".5"/>
<circle cx="102.7" cy="104.4" r="5.1" fill="#009090" fill-opacity=".5"/>
<circle cx="58.2" cy="153.5" r="5.4" fill="#009090" fill-opacity=".5"/>
<circle cx="89.0" cy="74.9" r="4.7" fill="#009090" fill-opacity=".5"/>
<circle cx="73.6" cy="136.2" r="4.7" fill="#009090" fill-opacity=".5"/>
<circle cx="133.7" cy="162.5" r="5.2" fill="#009090" fill-opacity=".5"/>
<circle cx="118.5" cy="156.5" r="6.4" fill="#009090" fill-opacity=".5"/>
<circle cx="69.6" cy="171.5" r="6.9" fill="#009090" fill-opacity=".5"/>
<circle cx="112.1" cy="211.1" r="4.0" fill="#001a1a" fill-opacity=".5"/>
<circle cx="77.3" cy="152.7" r="5.2" fill="#001a1a" fill-opacity=".5"/>
<circle cx="157.6" cy="179.8" r="5.1" fill="#001a1a" fill-opacity=".5"/>
<circle cx="162.9" cy="145.8" r="4.3" fill="#001a1a" fill-opacity=".5"/>
<circle cx="67.6" cy="116.5" r="5.7" fill="#001a1a" fill-opacity=".5"/>
<circle cx="171.8" cy="109.3" r="5.3" fill="#001a1a" fill-opacity=".5"/>
<circle cx="129.3" cy="68.9" r="5.1" fill="#001a1a" fill-opacity=".5"/>
<circle cx="140.9" cy="181.5" r="5.7" fill="#001a1a" fill-opacity=".5"/>
<circle cx="176.5" cy="109.9" r="5.8" fill="#001a1a" fill-opacity=".5"/>
<circle cx="70.5" cy="193.9" r="4.0" fill="#001a1a" fill-opacity=".5"/>
<circle cx="149.6" cy="169.6" r="5.8" fill="#001a1a" fill-opacity=".5"/>
<circle cx="144.5" cy="183.2" r="6.7" fill="#001a1a" fill-opacity=".5"/>
<circle cx="74.4" cy="168.6" r="4.7" fill="#001a1a" fill-opacity=".5"/>
<circle cx="90.5" cy="208.6" r="5.1" fill="#001a1a" fill-opacity=".5"/>
<circle cx="172.5" cy="111.8" r="5.8" fill="#001a1a" fill-opacity=".5"/>
<circle cx="104.6" cy="213.4" r="5.5" fill="#001a1a" fill-opacity=".5"/>
<circle cx="73.4" cy="153.8" r="7.0" fill="#001a1a" fill-opacity=".5"/>
<circle cx="69.7" cy="130.9" r="5.4" fill="#001a1a" fill-opacity=".5"/>
<circle cx="147.1" cy="176.3" r="5.3" fill="#001a1a" fill-opacity=".5"/>
<circle cx="93.4" cy="201.5" r="6.5" fill="#001a1a" fill-opacity=".5"/>
<circle cx="160.8" cy="133.4" r="4.8" fill="#001a1a" fill-opacity=".5"/>
<circle cx="165.8" cy="99.3" r="4.7" fill="#001a1a" fill-opacity=".5"/>
<circle cx="105.6" cy="161.7" r="7.0" fill="#001a1a" fill-opacity=".5"/>
<circle cx="92.9" cy="194.5" r="5.4" fill="#001a1a" fill-opacity=".5"/>
<circle cx="75.3" cy="77.7" r="6.2" fill="#001a1a" fill-opacity=".5"/>
<circle cx="153.7" cy="178.4" r="4.9" fill="#001a1a" fill-opacity=".5"/>
<circle cx="69.9" cy="119.5" r="4.9" fill="#001a1a" fill-opacity=".5"/>
<circle cx="62.9" cy="119.8" r="5.1" fill="#001a1a" fill-opacity=".5"/>
<circle cx="107.5" cy="66.2" r="4.1" fill="#001a1a" fill-opacity=".5"/>
<circle cx="108.2" cy="184.7" r="6.7" fill="#001a1a" fill-opacity=".5"/>
<circle cx="149.3" cy="90.5" r="4.0" fill="#001a1a" fill-opacity=".5"/>
<circle cx="115.7" cy="76.2" r="5.7" fill="#001a1a" fill-opacity=".5"/>
<circle cx="95.9" cy="66.4" r="5.4" fill="#001a1a" fill-opacity=".5"/>
<circle cx="145.9" cy="102.8" r="5.2" fill="#001a1a" fill-opacity=".5"/>
<circle cx="125.5" cy="100.3" r="4.9" fill="#001a1a" fill-opacity=".5"/>
<circle cx="117.0" cy="111.7" r="6.5" fill="#001a1a" fill-opacity=".5"/>
<circle cx="92.3" cy="76.9" r="4.9" fill="#001a1a" fill-opacity=".5"/>
<circle cx="122.9" cy="50.7" r="4.4" fill="#001a1a" fill-opacity=".5"/>
<circle cx="55.9" cy="138.1" r="5.5" fill="#001a1a" fill-opacity=".5"/>
<circle cx="97.0" cy="159.4" r="5.8" fill="#001a1a" fill-opacity=".5"/>
<circle cx="114.1" cy="108.1" r="4.7" fill="#001a1a" fill-opacity=".5"/>
<circle cx="135.1" cy="60.9" r="6.0" fill="#001a1a" fill-opacity=".5"/>
<circle cx="166.5" cy="139.8" r="6.9" fill="#001a1a" fill-opacity=".5"/>
<circle cx="168.9" cy="130.8" r="4.1" fill="#001a1a" fill-opacity=".5"/>
</g></g>
<path filter="url(#blur5)" fill="#000" fill-rule="evenodd" d="M-30,-30H254V254H-30Z M31.099999999999994,130.0 C31.099999999999994,78.0 66.6,38.5 108.6,38.5 C150.6,38.5 186.1,78.0 186.1,130.0 C186.1,180.0 148.6,222.5 108.6,222.5 C68.6,222.5 31.099999999999994,180.0 31.099999999999994,130.0Z"/>
<g fill="none" stroke-linecap="round">
<g filter="url(#blur35)" stroke="#2c50c4" stroke-width="19" stroke-opacity=".75"><path d="M93.8,101.5 Q88.5,107.0 85.5,116.0 Q84.0,123.0 85.0,128.5"/><path d="M123.5,103.5 Q130.0,109.0 133.0,119.0 Q134.5,125.0 133.3,130.5"/></g>
<g filter="url(#blur2)" stroke="#8800ff" stroke-width="14"><path d="M93.8,101.5 Q88.5,107.0 85.5,116.0 Q84.0,123.0 85.0,128.5"/><path d="M123.5,103.5 Q130.0,109.0 133.0,119.0 Q134.5,125.0 133.3,130.5"/></g>
<g filter="url(#blur15)" stroke="#e04088" stroke-width="8.5"><path d="M93.6,101.8 Q88.5,107.5 85.6,115.5 L85.2,120.5"/><path d="M125.8,106.2 Q130.5,110.5 133.0,118.5 L133.6,122.0"/></g>
<g filter="url(#blur15)" stroke="#ff8810" stroke-width="5.6"><path d="M93.6,101.8 Q88.5,107.5 85.6,115.5 L85.2,120.5"/><path d="M125.8,106.2 Q130.5,110.5 133.0,118.5 L133.6,122.0"/></g>
<g filter="url(#blur1)" stroke="#fff0dc" stroke-width="3.6"><path d="M93.2,102.5 Q89.5,106.5 87.3,112.5"/><path d="M126.5,107.0 Q130.0,110.0 131.8,115.5"/></g>
</g>
<polygon points="90.2,91.8 92.7,94.3 96.1,95.2 100.7,98.5 103.7,104.0 103.7,110.3 97.8,115.8 92.3,113.7 89.8,112.4 83.9,112.4 78.0,111.8 76.6,107.6 79.3,100.6 84.3,95.2 89.8,93.5" fill="none" stroke="#f020f0" stroke-width="1" shape-rendering="crispEdges"/>
<polygon points="78.5,112.0 85.6,112.4 91.9,113.7 96.9,117.0 100.3,117.4 98.2,118.3 98.2,130.9 94.8,133.8 90.2,136.3 82.9,135.9 78.0,130.9 77.2,121.2" fill="none" stroke="#0000ff" stroke-width="1" shape-rendering="crispEdges"/>
<polygon points="127.6,92.4 129.7,95.2 134.3,96.4 137.7,101.5 141.7,106.5 141.9,111.8 136.4,113.7 129.1,114.9 121.7,117.4 115.8,114.9 114.4,108.6 116.7,102.3 121.7,97.3 127.2,95.2" fill="none" stroke="#c80000" stroke-width="1" shape-rendering="crispEdges"/>
<polygon points="121.7,117.4 129.1,115.3 136.4,113.7 142.3,112.0 144.4,117.0 144.6,126.5 142.7,133.0 138.1,137.0 130.1,137.2 124.9,133.8 122.8,127.5 121.7,121.2" fill="none" stroke="#008000" stroke-width="1" shape-rendering="crispEdges"/>
<polygon points="76.6,168.5 78.5,169.9 154.9,164.9 154.1,171.6 151.5,180.0 146.1,188.4 136.8,194.3 123.8,199.8 107.0,201.5 96.9,195.2 89.4,186.3 83.9,176.2 79.7,169.1" fill="none" stroke="#000" stroke-width="1" shape-rendering="crispEdges"/>
<rect x="209.5" y="212" width="14.5" height="12" fill="#fff"/>
</svg>

<!-- colour bar -->
<div class="abs" style="left:739px;top:146px;width:7px;height:224px;background:linear-gradient(to bottom,#fff 0%,#ffe8d8 5%,#ffc08a 13%,#ff8a10 23%,#f07038 28%,#d85080 34%,#b020d0 42%,#8c08ff 50%,#5a30e0 58%,#3c50c0 65%,#107c90 73%,#007878 77%,#004a4a 86%,#001a1a 94%,#000 100%)"></div>
<div class="abs" style="left:739px;top:145.5px;width:7px;height:1px;background:#000"></div>

<!-- mean counts table -->
<div class="box" style="left:47px;top:396px;width:700px;height:148.5px"></div>
<div class="hl" style="left:47px;top:431px;width:700px"></div>
<div class="hl" style="left:47px;top:509px;width:700px"></div>





<!-- specific binding -->
<div class="box" style="left:47px;top:570px;width:457px;height:259px"></div>
<div class="hl" style="left:47px;top:605px;width:457px"></div>
<div class="hl" style="left:47px;top:653px;width:457px"></div>
<div class="hl" style="left:47px;top:700px;width:457px"></div>
<div class="hl" style="left:47px;top:748px;width:457px"></div>
<div class="hl" style="left:47px;top:796px;width:457px"></div>
<div class="hl" style="left:222px;top:588px;width:105px"></div>

<!-- study parameter -->
<div class="box" style="left:512px;top:570px;width:235px;height:259px"></div>
<div class="hl" style="left:512px;top:605px;width:235px"></div>

<!-- right side -->
<div class="abs" style="left:800px;top:33px;width:217px;height:24.5px;background:#e6e6e6"></div>
<div class="abs" style="left:1020.3px;top:114px;width:12px;height:25.5px;box-sizing:border-box;background:#fff;border:1px solid #dcdcdc;border-radius:2px;box-shadow:0 1px 2px rgba(0,0,0,.35)"></div>
<!-- tree panel -->
<div class="abs" style="left:799.3px;top:154.8px;width:221.7px;height:696px;box-sizing:border-box;background:#fff;border:2.7px solid #c0c0c0"></div>
<div class="abs" style="left:803.8px;top:162.1px;width:210.2px;height:685.4px;box-sizing:border-box;border:1.3px solid #a4bcd8;background:#fff"></div>
<div class="abs" style="left:819.4px;top:163.4px;width:1.3px;height:30.2px;background:#8c8cde"></div>
<div class="abs" style="left:820px;top:172.8px;width:8.2px;height:1.3px;background:#2626d2"></div>
<div class="abs" style="left:820px;top:192.4px;width:8.2px;height:1.3px;background:#2626d2"></div>

<svg class="abs" style="left:0;top:0;pointer-events:none;will-change:transform;opacity:.999" width="1024" height="857" viewBox="0 0 1024 857">
<rect x="800.75" y="65.45" width="47.80" height="33.50" fill="#cecece" stroke="#b0b0b0" stroke-width=".9"/>
<rect x="856.75" y="65.45" width="47.80" height="33.50" fill="#cecece" stroke="#b0b0b0" stroke-width=".9"/>
<rect x="912.75" y="65.45" width="47.80" height="33.50" fill="#cecece" stroke="#b0b0b0" stroke-width=".9"/>
<rect x="968.75" y="65.45" width="47.80" height="33.50" fill="#cecece" stroke="#b0b0b0" stroke-width=".9"/>
<rect x="800.75" y="110.65" width="47.80" height="33.50" fill="#cecece" stroke="#b0b0b0" stroke-width=".9"/>
<rect x="856.75" y="110.65" width="47.80" height="33.50" fill="#cecece" stroke="#b0b0b0" stroke-width=".9"/>
<rect x="912.75" y="110.65" width="47.80" height="33.50" fill="#cecece" stroke="#b0b0b0" stroke-width=".9"/>
<rect x="968.75" y="110.65" width="47.80" height="33.50" fill="#cecece" stroke="#b0b0b0" stroke-width=".9"/>
<polygon points="817.9,76.4 820.5,75.6 821.4,79.5 817.7,80.4" fill="#f4f4e8" stroke="#8c8c6c" stroke-width=".5"/>
<polygon points="830.6,77.3 834.3,77.3 835.2,81.7 830.8,81.7" fill="#9a9a1c"/>
<polygon points="818.6,76.4 824.9,72.7 829.9,76.7 834.8,83.0 830.8,81.3 819.7,81.0" fill="#fff" stroke="#9a9a9a" stroke-width=".6"/>
<polygon points="821.4,79.7 825.4,75.6 829.5,79.7" fill="#8484ff"/>
<polygon points="814.6,80.8 831.0,80.8 834.3,91.1 817.9,91.1" fill="#dede5a" stroke="#6a6a10" stroke-width=".5"/>
<polyline points="817.7,91.5 834.5,91.5 831.3,81.3" fill="none" stroke="#3c3c00" stroke-width="1.2"/>
<polyline points="814.4,80.6 817.7,80.6" fill="none" stroke="#fff" stroke-width="1"/>
<rect x="872.6" y="73.6" width="15.8" height="17.8" fill="#808000" stroke="#000" stroke-width="1"/>
<rect x="875.1" y="74" width="10.6" height="10" fill="#fff"/>
<rect x="875.1" y="73.9" width="10.6" height="2.1" fill="#f01010"/>
<rect x="872.9" y="74" width="1.8" height="1.9" fill="#fff"/><rect x="886.2" y="74" width="1.8" height="1.9" fill="#fff"/>
<rect x="875.1" y="86.9" width="11" height="4.4" fill="#000"/>
<rect x="875.9" y="87.7" width="5.2" height="2.6" fill="#fff"/><rect x="881.8" y="87.5" width=".8" height="3" fill="#c0c0c0"/>
<g transform="translate(928.1 90.6) rotate(-48.5)"><polygon points="0,0 3,-1.2 3,1.2" fill="#000"/><polygon points="3,-1.3 7,-2.9 7,2.9 3,1.3" fill="#b0b010" stroke="#505000" stroke-width=".5"/><rect x="7" y="-2.9" width="12.6" height="5.8" fill="#e8e810" stroke="#505000" stroke-width=".6"/><rect x="7" y="-1.2" width="12.6" height="1.5" fill="#ffff70"/><rect x="7" y="1.4" width="12.6" height="1.2" fill="#a8a800"/><rect x="19.6" y="-2.9" width="2.2" height="5.8" rx="1" fill="#909010" stroke="#404000" stroke-width=".6"/></g>
<text transform="translate(986.6 91.3) scale(.78 1)" font-size="25.5" font-weight="bold" fill="#e4e400" stroke="#3c3c00" stroke-width="1.7" paint-order="stroke" font-family="Liberation Sans, sans-serif">?</text>
<rect x="815.8" y="117.9" width="5" height="2.75" fill="#ffffff"/>
<rect x="815.8" y="120.6" width="5" height="2.75" fill="#ff0000"/>
<rect x="815.8" y="123.3" width="5" height="2.75" fill="#ffff00"/>
<rect x="815.8" y="126.0" width="5" height="2.75" fill="#00ff00"/>
<rect x="815.8" y="128.7" width="5" height="2.75" fill="#00ffff"/>
<rect x="815.8" y="131.4" width="5" height="2.75" fill="#0000ff"/>
<rect x="815.8" y="134.1" width="5" height="2.75" fill="#ff00ff"/>
<rect x="815.8" y="136.2" width="5" height=".8" fill="#505050"/>
<path d="M828.9 119.2 L833.2 124.2 L829.5 124.2 L829.5 130.4 L833.2 130.4 L828.9 135.4 L824.6 130.4 L828.3 130.4 L828.3 124.2 L824.6 124.2 Z" fill="#000"/>
<polygon points="868.0,132.8 879.2,138.9 895.2,128.4 892.3,126.9" fill="#6c6c6c"/>
<polygon points="866.9,125.8 877.2,120.8 892.3,124.3 879.0,130.0" fill="#e0e0e0" stroke="#9c9c9c" stroke-width=".5"/>
<polygon points="866.9,125.8 879.0,130.0 879.0,136.3 866.9,131.9" fill="#bcbcbc" stroke="#8a8a8a" stroke-width=".5"/>
<polygon points="879.0,130.0 892.3,124.3 892.3,130.4 879.0,136.3" fill="#909090"/>
<polygon points="870.2,127.4 876.3,129.3 876.3,135.0 870.2,132.8" fill="#a8a8a8"/>
<polyline points="891.9,124.7 891.9,130.6" stroke="#202020" stroke-width="1" fill="none"/>
<polygon points="892.3,128.4 894.9,127.1 892.7,130.4" fill="#808080"/>
<circle cx="873.5" cy="126.4" r=".9" fill="#20d020"/><circle cx="875.5" cy="127.2" r=".9" fill="#f03030"/>
<polygon points="878.5,121.4 884.2,114.0 891.2,117.9 885.5,125.6" fill="#fff" stroke="#a0a0a0" stroke-width=".5"/>
<polyline points="881.6,122.5 886.4,117.3" stroke="#2828f0" stroke-width="2.2" stroke-dasharray="1.7 .9" fill="none"/>
<polygon points="980.0,132.8 991.2,138.9 1007.2,128.4 1004.3,126.9" fill="#6c6c6c"/>
<polygon points="978.9,125.8 989.2,120.8 1004.3,124.3 991.0,130.0" fill="#e0e0e0" stroke="#9c9c9c" stroke-width=".5"/>
<polygon points="978.9,125.8 991.0,130.0 991.0,136.3 978.9,131.9" fill="#bcbcbc" stroke="#8a8a8a" stroke-width=".5"/>
<polygon points="991.0,130.0 1004.3,124.3 1004.3,130.4 991.0,136.3" fill="#909090"/>
<polygon points="982.2,127.4 988.3,129.3 988.3,135.0 982.2,132.8" fill="#a8a8a8"/>
<polyline points="1003.9,124.7 1003.9,130.6" stroke="#202020" stroke-width="1" fill="none"/>
<polygon points="1004.3,128.4 1006.9,127.1 1004.7,130.4" fill="#808080"/>
<circle cx="985.5" cy="126.4" r=".9" fill="#20d020"/><circle cx="987.5" cy="127.2" r=".9" fill="#f03030"/>
<polygon points="990.5,121.4 996.2,114.0 1003.2,117.9 997.5,125.6" fill="#fff" stroke="#a0a0a0" stroke-width=".5"/>
<polyline points="993.6,122.5 998.4,117.3" stroke="#2828f0" stroke-width="2.2" stroke-dasharray="1.7 .9" fill="none"/>
<rect x="982.0" y="134.4" width="20.1" height="6.3" fill="#00e8e8"/>
<text transform="translate(983.1 139.8) scale(.74 1)" font-size="7.6" font-weight="bold" fill="#101010" font-family="Liberation Sans, sans-serif" letter-spacing=".2">SETUP</text>
<path d="M936.5 126 V130.6 M936.5 130.6 L932.5 133 M936.5 130.6 L940 133" stroke="#000" stroke-width="1" fill="none"/>
<rect x="931.3" y="113.3" width="10.4" height="8" rx="1" fill="#c8c8c8" stroke="#6a6a6a" stroke-width=".7"/>
<rect x="933.5" y="114.89999999999999" width="6" height="4.8" fill="#00a4a4" stroke="#303030" stroke-width=".5"/>
<rect x="930.0999999999999" y="121.8" width="12.8" height="4.4" rx="1" fill="#c4c4c4" stroke="#6a6a6a" stroke-width=".7"/>
<rect x="930.0999999999999" y="125.5" width="12.8" height="1.3" fill="#6c6c6c"/>
<rect x="932.3" y="123.6" width="2.2" height="1" fill="#20d020"/><rect x="936.6999999999999" y="123.5" width="4" height="1.2" fill="#303030"/>
<rect x="923.5" y="128.3" width="10.4" height="8" rx="1" fill="#c8c8c8" stroke="#6a6a6a" stroke-width=".7"/>
<rect x="925.7" y="129.9" width="6" height="4.8" fill="#1010e8" stroke="#303030" stroke-width=".5"/>
<rect x="922.3" y="136.8" width="12.8" height="4.4" rx="1" fill="#c4c4c4" stroke="#6a6a6a" stroke-width=".7"/>
<rect x="922.3" y="140.5" width="12.8" height="1.3" fill="#6c6c6c"/>
<rect x="924.5" y="138.60000000000002" width="2.2" height="1" fill="#20d020"/><rect x="928.9" y="138.5" width="4" height="1.2" fill="#303030"/>
<rect x="938.6" y="128.3" width="10.4" height="8" rx="1" fill="#c8c8c8" stroke="#6a6a6a" stroke-width=".7"/>
<rect x="940.8000000000001" y="129.9" width="6" height="4.8" fill="#1010e8" stroke="#303030" stroke-width=".5"/>
<rect x="937.4" y="136.8" width="12.8" height="4.4" rx="1" fill="#c4c4c4" stroke="#6a6a6a" stroke-width=".7"/>
<rect x="937.4" y="140.5" width="12.8" height="1.3" fill="#6c6c6c"/>
<rect x="939.6" y="138.60000000000002" width="2.2" height="1" fill="#20d020"/><rect x="944.0" y="138.5" width="4" height="1.2" fill="#303030"/>
</svg>
<svg class="abs" style="left:0;top:0;pointer-events:none;will-change:transform;opacity:.999" width="1024" height="857" viewBox="0 0 1024 857" font-family="Liberation Sans, sans-serif" text-rendering="geometricPrecision">
<text transform="translate(21.40 16.60) scale(0.8427 1)" font-size="11.8" fill="#222" stroke="#222" stroke-width="0.2">DaTSCAN</text>
<text transform="translate(7.37 50.60) scale(0.9616 1)" font-size="12.1" fill="#000" font-weight="bold">_ANO_DaTSCAN3 - DatScan SPECT</text>
<text transform="translate(307.90 114.25) scale(0.9739 1)" font-size="20.5" fill="#191987" stroke="#191987" stroke-width="0.2">DaTSCAN - Results</text>
<text transform="translate(46.37 143.80) scale(0.9377 1)" font-size="16.4" fill="#191987" stroke="#191987" stroke-width="0.35">R</text>
<text transform="translate(727.52 143.80) scale(0.9386 1)" font-size="16.4" fill="#191987" stroke="#191987" stroke-width="0.35">L</text>
<text transform="translate(46.37 387.90) scale(0.9377 1)" font-size="16.4" fill="#191987" stroke="#191987" stroke-width="0.35">R</text>
<text transform="translate(727.52 387.90) scale(0.9386 1)" font-size="16.4" fill="#191987" stroke="#191987" stroke-width="0.35">L</text>
<text transform="translate(392.00 143.80) scale(0.9628 1)" font-size="16.4" fill="#191987" stroke="#191987" stroke-width="0.35">A</text>
<text transform="translate(392.40 387.90) scale(0.9118 1)" font-size="16.4" fill="#191987" stroke="#191987" stroke-width="0.35">P</text>
<text transform="translate(749.68 153.90) scale(0.7254 1)" font-size="9.6" fill="#111" font-weight="bold">100%</text>
<text transform="translate(758.66 368.70) scale(0.6341 1)" font-size="9.6" fill="#111" font-weight="bold">0%</text>
<text transform="translate(51.26 414.50) scale(1.0118 1)" font-size="15.3" fill="#191987" stroke="#191987" stroke-width="0.2">Mean Counts</text>
<text transform="translate(68.24 426.00) scale(1.0577 1)" font-size="10.2" fill="#191987" stroke="#191987" stroke-width="0.2">[Counts/Pixel]</text>
<text transform="translate(178.34 420.25) scale(0.9737 1)" font-size="13.5" fill="#eb2828" stroke="#eb2828" stroke-width="0.2">Caud-L</text>
<text transform="translate(265.33 420.25) scale(0.9965 1)" font-size="13.5" fill="#f032f0" stroke="#f032f0" stroke-width="0.2">Caud-R</text>
<text transform="translate(352.92 420.25) scale(0.9990 1)" font-size="13.5" fill="#1e821e" stroke="#1e821e" stroke-width="0.2">Put-L</text>
<text transform="translate(439.89 420.25) scale(1.0288 1)" font-size="13.5" fill="#2828e6" stroke="#2828e6" stroke-width="0.2">Put-R</text>
<text transform="translate(527.70 420.25) scale(0.9692 1)" font-size="13.5" fill="#1e1e1e" stroke="#1e1e1e" stroke-width="0.2">Reference</text>
<text transform="translate(51.41 454.30) scale(0.9791 1)" font-size="13.5" fill="#191987" stroke="#191987" stroke-width="0.2">Slice 64</text>
<text transform="translate(178.04 454.30) scale(0.9825 1)" font-size="13.5" fill="#eb2828" stroke="#eb2828" stroke-width="0.2">21.61</text>
<text transform="translate(265.34 454.30) scale(0.9825 1)" font-size="13.5" fill="#f032f0" stroke="#f032f0" stroke-width="0.2">22.08</text>
<text transform="translate(353.76 454.30) scale(0.9825 1)" font-size="13.5" fill="#1e821e" stroke="#1e821e" stroke-width="0.2">19.38</text>
<text transform="translate(441.26 454.30) scale(0.9825 1)" font-size="13.5" fill="#2828e6" stroke="#2828e6" stroke-width="0.2">19.78</text>
<text transform="translate(531.34 454.30) scale(0.9825 1)" font-size="13.5" fill="#1e1e1e" stroke="#1e1e1e" stroke-width="0.2">7.01</text>
<text transform="translate(51.41 475.90) scale(0.9791 1)" font-size="13.5" fill="#191987" stroke="#191987" stroke-width="0.2">Slice 65</text>
<text transform="translate(178.04 475.90) scale(0.9825 1)" font-size="13.5" fill="#eb2828" stroke="#eb2828" stroke-width="0.2">23.14</text>
<text transform="translate(265.34 475.90) scale(0.9825 1)" font-size="13.5" fill="#f032f0" stroke="#f032f0" stroke-width="0.2">23.42</text>
<text transform="translate(353.76 475.90) scale(0.9825 1)" font-size="13.5" fill="#1e821e" stroke="#1e821e" stroke-width="0.2">19.86</text>
<text transform="translate(441.26 475.90) scale(0.9825 1)" font-size="13.5" fill="#2828e6" stroke="#2828e6" stroke-width="0.2">20.61</text>
<text transform="translate(531.34 475.90) scale(0.9825 1)" font-size="13.5" fill="#1e1e1e" stroke="#1e1e1e" stroke-width="0.2">7.07</text>
<text transform="translate(51.41 497.50) scale(0.9791 1)" font-size="13.5" fill="#191987" stroke="#191987" stroke-width="0.2">Slice 66</text>
<text transform="translate(178.04 497.50) scale(0.9825 1)" font-size="13.5" fill="#eb2828" stroke="#eb2828" stroke-width="0.2">24.45</text>
<text transform="translate(265.34 497.50) scale(0.9825 1)" font-size="13.5" fill="#f032f0" stroke="#f032f0" stroke-width="0.2">24.40</text>
<text transform="translate(353.76 497.50) scale(0.9825 1)" font-size="13.5" fill="#1e821e" stroke="#1e821e" stroke-width="0.2">19.36</text>
<text transform="translate(441.26 497.50) scale(0.9825 1)" font-size="13.5" fill="#2828e6" stroke="#2828e6" stroke-width="0.2">21.18</text>
<text transform="translate(531.34 497.50) scale(0.9825 1)" font-size="13.5" fill="#1e1e1e" stroke="#1e1e1e" stroke-width="0.2">7.11</text>
<text transform="translate(52.00 532.60) scale(0.9791 1)" font-size="13.5" fill="#191987" stroke="#191987" stroke-width="0.2">Average</text>
<text transform="translate(178.04 532.60) scale(0.9825 1)" font-size="13.5" fill="#eb2828" stroke="#eb2828" stroke-width="0.2">23.06</text>
<text transform="translate(265.34 532.60) scale(0.9825 1)" font-size="13.5" fill="#f032f0" stroke="#f032f0" stroke-width="0.2">23.30</text>
<text transform="translate(353.76 532.60) scale(0.9825 1)" font-size="13.5" fill="#1e821e" stroke="#1e821e" stroke-width="0.2">19.54</text>
<text transform="translate(441.26 532.60) scale(0.9825 1)" font-size="13.5" fill="#2828e6" stroke="#2828e6" stroke-width="0.2">20.52</text>
<text transform="translate(531.34 532.60) scale(0.9825 1)" font-size="13.5" fill="#1e1e1e" stroke="#1e1e1e" stroke-width="0.2">7.06</text>
<text transform="translate(51.11 594.10) scale(0.9943 1)" font-size="15.5" fill="#191987" stroke="#191987" stroke-width="0.2">Specific Binding</text>
<text transform="translate(170.73 594.10) scale(0.9977 1)" font-size="15.5" fill="#191987" stroke="#191987" stroke-width="0.2">=</text>
<text transform="translate(227.35 585.40) scale(0.9687 1)" font-size="13.5" fill="#191987" stroke="#191987" stroke-width="0.2">ROI - Reference</text>
<text transform="translate(244.55 601.90) scale(0.9684 1)" font-size="13.5" fill="#191987" stroke="#191987" stroke-width="0.2">Reference</text>
<text transform="translate(51.17 625.40) scale(1.0335 1)" font-size="13.5" fill="#191987" stroke="#191987" stroke-width="0.2">Striatum Left:</text>
<text transform="translate(51.17 642.60) scale(1.0357 1)" font-size="13.5" fill="#191987" stroke="#191987" stroke-width="0.2">Striatum Right:</text>
<text transform="translate(50.72 672.80) scale(0.9974 1)" font-size="13.5" fill="#191987" stroke="#191987" stroke-width="0.2">Nucl. Caudatus Left:</text>
<text transform="translate(50.72 690.00) scale(1.0014 1)" font-size="13.5" fill="#191987" stroke="#191987" stroke-width="0.2">Nucl. Caudatus Right:</text>
<text transform="translate(50.71 719.70) scale(1.0121 1)" font-size="13.5" fill="#191987" stroke="#191987" stroke-width="0.2">Putamen Left:</text>
<text transform="translate(50.70 738.40) scale(1.0163 1)" font-size="13.5" fill="#191987" stroke="#191987" stroke-width="0.2">Putamen Right:</text>
<text transform="translate(50.73 768.75) scale(0.9869 1)" font-size="13.5" fill="#191987" stroke="#191987" stroke-width="0.2">Put. / Nucl. Caud. Left:</text>
<text transform="translate(50.73 786.00) scale(0.9905 1)" font-size="13.5" fill="#191987" stroke="#191987" stroke-width="0.2">Put. / Nucl. Caud. Right:</text>
<text transform="translate(51.17 816.00) scale(1.0329 1)" font-size="13.5" fill="#191987" stroke="#191987" stroke-width="0.2">Striatum Left / Striatum Right:</text>
<text transform="translate(220.81 625.40) scale(1.0278 1)" font-size="13.5" fill="#191987" stroke="#191987" stroke-width="0.2">2.02</text>
<text transform="translate(220.81 642.60) scale(1.0278 1)" font-size="13.5" fill="#191987" stroke="#191987" stroke-width="0.2">2.10</text>
<text transform="translate(220.81 672.80) scale(1.0278 1)" font-size="13.5" fill="#191987" stroke="#191987" stroke-width="0.2">2.27</text>
<text transform="translate(220.81 690.00) scale(1.0278 1)" font-size="13.5" fill="#191987" stroke="#191987" stroke-width="0.2">2.30</text>
<text transform="translate(221.71 719.70) scale(1.0278 1)" font-size="13.5" fill="#191987" stroke="#191987" stroke-width="0.2">1.77</text>
<text transform="translate(221.71 738.40) scale(1.0278 1)" font-size="13.5" fill="#191987" stroke="#191987" stroke-width="0.2">1.91</text>
<text transform="translate(220.94 768.75) scale(1.0278 1)" font-size="13.5" fill="#191987" stroke="#191987" stroke-width="0.2">0.78</text>
<text transform="translate(220.94 786.00) scale(1.0278 1)" font-size="13.5" fill="#191987" stroke="#191987" stroke-width="0.2">0.83</text>
<text transform="translate(308.31 632.60) scale(1.0278 1)" font-size="13.5" fill="#191987" stroke="#191987" stroke-width="0.2">2.06</text>
<text transform="translate(308.31 679.70) scale(1.0278 1)" font-size="13.5" fill="#191987" stroke="#191987" stroke-width="0.2">2.28</text>
<text transform="translate(309.21 730.60) scale(1.0278 1)" font-size="13.5" fill="#191987" stroke="#191987" stroke-width="0.2">1.84</text>
<text transform="translate(308.44 775.90) scale(1.0278 1)" font-size="13.5" fill="#191987" stroke="#191987" stroke-width="0.2">0.80</text>
<text transform="translate(308.44 816.00) scale(1.0278 1)" font-size="13.5" fill="#191987" stroke="#191987" stroke-width="0.2">0.96</text>
<text transform="translate(274.31 632.53) scale(0.9814 1)" font-size="19.36" fill="#191987" stroke="#191987" stroke-width="0.2">}</text>
<text transform="translate(274.31 679.94) scale(1.0064 1)" font-size="18.88" fill="#191987" stroke="#191987" stroke-width="0.2">}</text>
<text transform="translate(274.31 730.32) scale(0.9789 1)" font-size="19.41" fill="#191987" stroke="#191987" stroke-width="0.2">}</text>
<text transform="translate(274.31 775.78) scale(0.9927 1)" font-size="19.14" fill="#191987" stroke="#191987" stroke-width="0.2">}</text>
<text transform="translate(516.06 593.50) scale(0.9857 1)" font-size="15.5" fill="#191987" stroke="#191987" stroke-width="0.2">Study Parameter</text>
<text transform="translate(515.78 624.75) scale(0.9515 1)" font-size="12.7" fill="#191987" stroke="#191987" stroke-width="0.2">Patient Name:</text>
<text transform="translate(622.71 625.65) scale(0.8186 1)" font-size="12.0" fill="#191987" stroke="#191987" stroke-width="0.28">DaTSCAN3</text>
<text transform="translate(515.76 642.20) scale(0.9755 1)" font-size="12.7" fill="#191987" stroke="#191987" stroke-width="0.2">Patient ID:</text>
<text transform="translate(623.15 643.10) scale(0.8077 1)" font-size="12.0" fill="#191987" stroke="#191987" stroke-width="0.28">_ANO_DaTSCAN3</text>
<text transform="translate(515.76 659.65) scale(0.9724 1)" font-size="12.7" fill="#191987" stroke="#191987" stroke-width="0.2">Birth Date:</text>
<text transform="translate(623.04 660.55) scale(0.7898 1)" font-size="12.0" fill="#191987" stroke="#191987" stroke-width="0.28">11.04.1949</text>
<text transform="translate(516.13 677.10) scale(0.9810 1)" font-size="12.7" fill="#191987" stroke="#191987" stroke-width="0.2">Comment:</text>
<text transform="translate(622.75 678.00) scale(0.7839 1)" font-size="12.0" fill="#191987" stroke="#191987" stroke-width="0.28">DatScan SPECT</text>
<text transform="translate(516.75 694.55) scale(0.9417 1)" font-size="12.7" fill="#191987" stroke="#191987" stroke-width="0.2">ACQ Date:</text>
<text transform="translate(623.12 695.45) scale(0.7844 1)" font-size="12.0" fill="#191987" stroke="#191987" stroke-width="0.28">30.11.2017  13:54:40</text>
<text transform="translate(515.80 712.00) scale(0.9399 1)" font-size="12.7" fill="#191987" stroke="#191987" stroke-width="0.2">Kit (Nuclide):</text>
<text transform="translate(622.60 712.90) scale(0.8296 1)" font-size="12.0" fill="#191987" stroke="#191987" stroke-width="0.28">I123-DatScan, 156.0MBq</text>
<text transform="translate(515.84 729.45) scale(0.8941 1)" font-size="12.7" fill="#191987" stroke="#191987" stroke-width="0.2">Ref. Physician:</text>
<text transform="translate(623.07 730.35) scale(0.9058 1)" font-size="12.0" fill="#191987" stroke="#191987" stroke-width="0.28">anonym</text>
<text transform="translate(516.21 746.90) scale(0.9507 1)" font-size="12.7" fill="#191987" stroke="#191987" stroke-width="0.2">Study Index:</text>
<text transform="translate(623.00 747.80) scale(0.8795 1)" font-size="12.0" fill="#191987" stroke="#191987" stroke-width="0.28">/012</text>
<text transform="translate(516.75 781.80) scale(0.9482 1)" font-size="12.7" fill="#191987" stroke="#191987" stroke-width="0.2">ACQ Zoom:</text>
<text transform="translate(623.56 782.70) scale(0.7720 1)" font-size="12.0" fill="#191987" stroke="#191987" stroke-width="0.28">1.50</text>
<text transform="translate(516.25 799.25) scale(0.8814 1)" font-size="12.7" fill="#191987" stroke="#191987" stroke-width="0.2">Slice Thickness:</text>
<text transform="translate(622.98 800.15) scale(0.8708 1)" font-size="12.0" fill="#191987" stroke="#191987" stroke-width="0.28">2.00 mm</text>
<text transform="translate(516.75 816.70) scale(0.9728 1)" font-size="12.7" fill="#191987" stroke="#191987" stroke-width="0.2">Attenuation Corr.:</text>
<text transform="translate(622.55 817.60) scale(0.8806 1)" font-size="12.0" fill="#191987" stroke="#191987" stroke-width="0.28">Iterativ</text>
<text transform="translate(258.90 367.70) scale(0.9388 1)" font-size="10.6" fill="#202020" stroke="#202020" stroke-width="0.2">64</text>
<text transform="translate(491.50 367.70) scale(0.9526 1)" font-size="10.6" fill="#202020" stroke="#202020" stroke-width="0.2">65</text>
<text transform="translate(724.00 367.70) scale(0.9526 1)" font-size="10.6" fill="#202020" stroke="#202020" stroke-width="0.2">66</text>
<text transform="translate(831.89 178.10) scale(0.9541 1)" font-size="12.5" fill="#14146e" font-weight="bold">Sequence Display</text>
<text transform="translate(831.63 197.70) scale(0.9436 1)" font-size="12.5" fill="#14146e" font-weight="bold">ROI Function</text>
</svg>
</body></html>
